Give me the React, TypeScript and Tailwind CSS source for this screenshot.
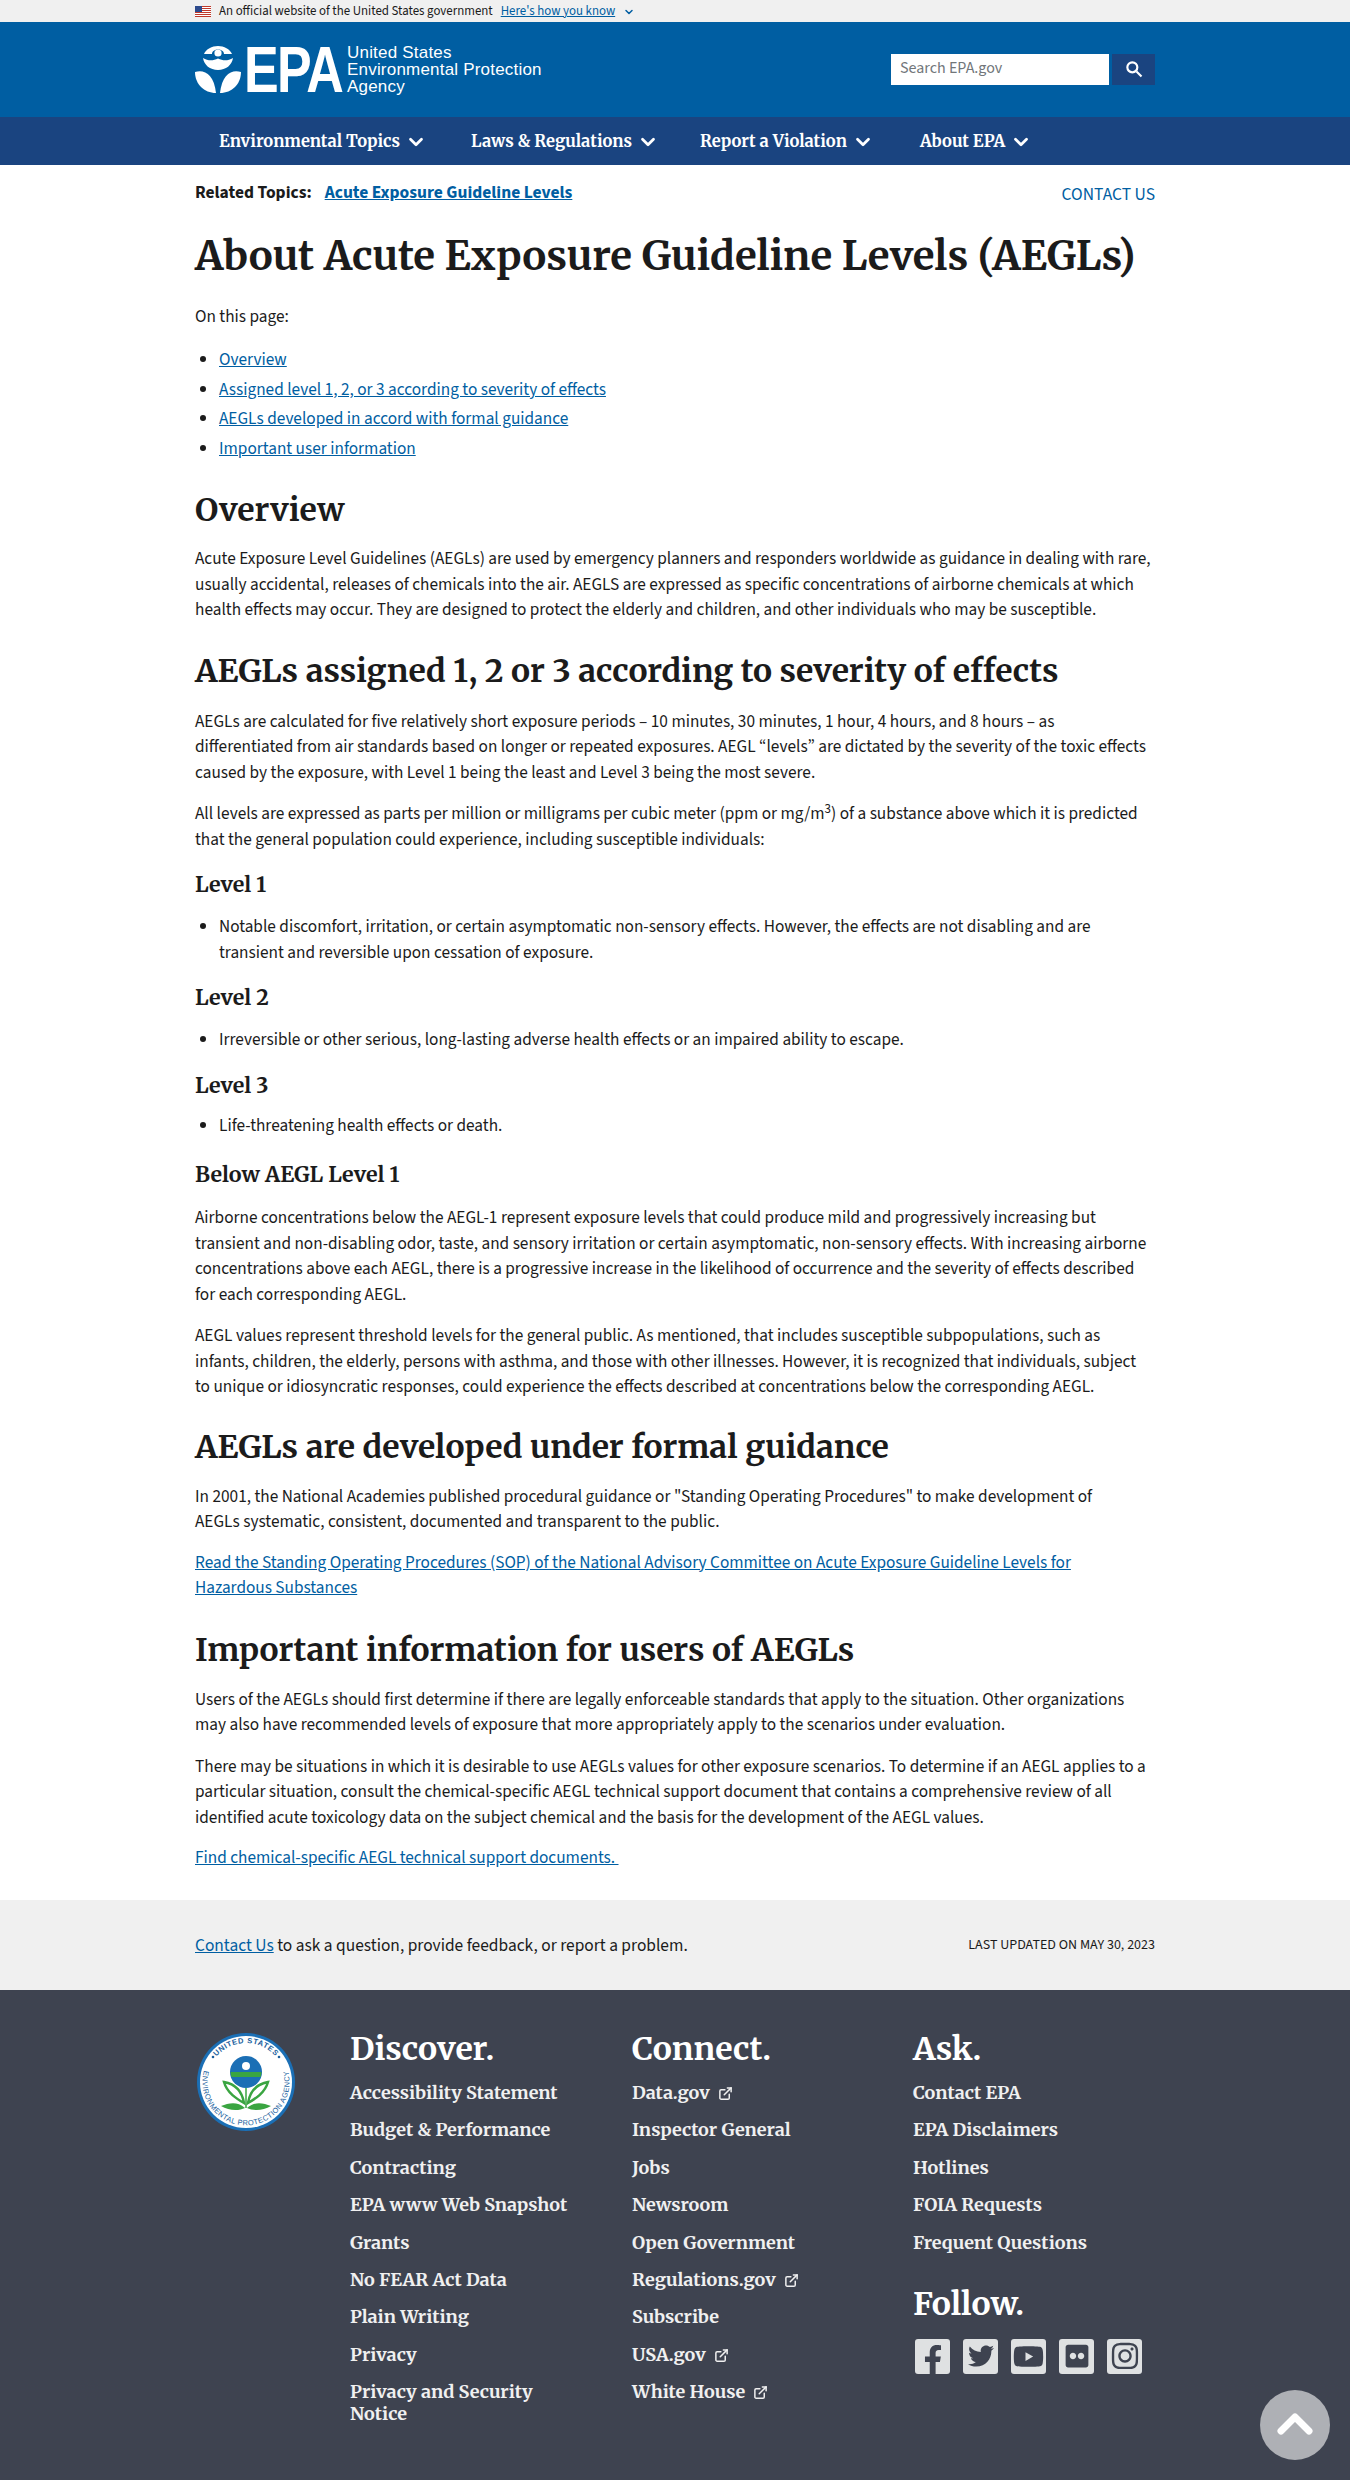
import { ChevronDown, ChevronUp, ExternalLink } from "lucide-react"
import { FaFacebookF, FaFlickr, FaInstagram, FaTwitter, FaYoutube } from "react-icons/fa"
import type { ReactNode } from "react"

const serif = "font-['Merriweather','Liberation_Serif',serif]"
const h2 = `${serif} font-bold text-[31.9px] leading-[42px]`
const h3 = `${serif} font-bold text-[21.4px] leading-[30px]`

function Flag() {
  return (
    <svg width="16" height="11" viewBox="0 0 16 11" className="shrink-0">
      <rect width="16" height="11" fill="#fff" />
      <path d="M0 0h16v1H0zM0 2h16v1H0zM0 4h16v1H0zM0 6h16v1H0zM0 8h16v1H0zM0 10h16v1H0z" fill="#c0392b" />
      <rect width="7" height="6" fill="#2c4a8c" />
    </svg>
  )
}

function EpaMark() {
  return (
    <svg width="46" height="47" viewBox="0 0 46 47" className="shrink-0">
      {/* globe with wave band */}
      <path d="M9 8 C11 3 17 0 23 0 C29 0 35 3 37 8 L29 8 C29 5 26 3.5 23 3.5 C20 3.5 17 5 17 8 Z" fill="#fff" />
      <circle cx="23" cy="7" r="3.6" fill="#fff" />
      <path d="M8 12 C13 15 18 15 23 12.5 C28 15 33 15 38 12 C37 19 31 24 23 24 C15 24 9 19 8 12 Z" fill="#fff" />
      {/* leaves */}
      <path d="M0 26 C9 23 19 28 21 47 C9 47 0 38 0 26 Z" fill="#fff" />
      <path d="M46 26 C37 23 27 28 25 47 C37 47 46 38 46 26 Z" fill="#fff" />
    </svg>
  )
}

function Seal() {
  return (
    <svg width="98" height="98" viewBox="0 0 98 98">
      <circle cx="49" cy="49" r="49" fill="#1b6fb5" />
      <circle cx="49" cy="49" r="46" fill="#fff" />
      <defs>
        <path id="sealTop" d="M10 49 a39 39 0 0 1 78 0" />
        <path id="sealBottom" d="M8.1 34.1 A43.5 43.5 0 1 0 89.9 34.1" />
      </defs>
      <text fontSize="7.6" fontWeight="700" fill="#1b5f9e" fontFamily="Liberation Sans, sans-serif" letterSpacing="0.6">
        <textPath href="#sealTop" startOffset="50%" textAnchor="middle">UNITED STATES</textPath>
      </text>
      <text fontSize="7.4" fill="#1b5f9e" fontFamily="Liberation Sans, sans-serif" letterSpacing="0.4">
        <textPath href="#sealBottom" startOffset="50%" textAnchor="middle">ENVIRONMENTAL PROTECTION AGENCY</textPath>
      </text>
      <circle cx="16" cy="24" r="1.3" fill="#1b5f9e" />
      <circle cx="82" cy="24" r="1.3" fill="#1b5f9e" />
      <circle cx="49" cy="39" r="16" fill="#1b6fb5" />
      <path d="M33.5 39 h31 a16 16 0 0 1 -1 5 h-29 a16 16 0 0 1 -1 -5 Z" fill="#3aa541" />
      <circle cx="49" cy="33" r="4" fill="#fff" />
      <path d="M49 55 V75" stroke="#3aa541" strokeWidth="1.5" />
      <path d="M47 70 C40 66 30 60 27 49 C38 51 45 58 47 70 Z M51 70 C58 66 68 60 71 49 C60 51 53 58 51 70 Z" fill="#fff" stroke="#3aa541" strokeWidth="2.5" />
      <path d="M48 75 C40 68 32 70 24 73 C32 78 42 78 48 75 Z M50 75 C58 68 66 70 74 73 C66 78 56 78 50 75 Z" fill="#3aa541" />
    </svg>
  )
}

function BodyLink({ children }: { children: ReactNode }) {
  return <a className="text-[#005ea2] underline">{children}</a>
}

function FooterLink({ label, external }: { label: string; external?: boolean }) {
  return (
    <li className={`${serif} text-[18px] leading-[22px] font-bold text-[#f0f0f0] mb-[15.4px]`}>
      {label}
      {external && <ExternalLink className="inline ml-2 align-[-2px]" size={15} strokeWidth={2.4} />}
    </li>
  )
}

function Social({ children }: { children: ReactNode }) {
  return (
    <div className="w-[35px] h-[35px] rounded-[3px] bg-[#dfe1e2] text-[#3e4350] flex items-center justify-center overflow-hidden">
      {children}
    </div>
  )
}

const navItems = [
  { label: "Environmental Topics", cls: "w-[252px]" },
  { label: "Laws & Regulations", cls: "w-[229px]" },
  { label: "Report a Violation", cls: "w-[220px]" },
  { label: "About EPA", cls: "" },
]

const discover = ["Accessibility Statement", "Budget & Performance", "Contracting", "EPA www Web Snapshot", "Grants", "No FEAR Act Data", "Plain Writing", "Privacy", "Privacy and Security Notice"]
const connect: [string, boolean][] = [["Data.gov", true], ["Inspector General", false], ["Jobs", false], ["Newsroom", false], ["Open Government", false], ["Regulations.gov", true], ["Subscribe", false], ["USA.gov", true], ["White House", true]]
const ask = ["Contact EPA", "EPA Disclaimers", "Hotlines", "FOIA Requests", "Frequent Questions"]

export default function App() {
  return (
    <div className="relative w-[1350px] h-[2480px] overflow-hidden bg-white text-[#1b1b1b] font-['Source_Sans_3','Source_Sans_Pro','Lato',sans-serif] text-[17.26px] leading-[25.5px]">
      {/* Gov banner */}
      <div className="h-[22px] bg-[#f0f0f0] px-[195px] flex items-center gap-2 text-[12.9px] pt-px">
        <Flag />
        <span>An official website of the United States government</span>
        <a className="text-[#005ea2] underline">Here's how you know</a>
        <ChevronDown size={12} strokeWidth={3} className="text-[#005ea2]" />
      </div>

      {/* Header */}
      <div className="h-[95px] bg-[#005ea2] px-[195px] flex items-center justify-between">
        <div className="flex items-center text-white">
          <EpaMark />
          <div className="w-[103px] ml-[3px] h-[47px] flex items-center">
            <span className="inline-block origin-left scale-x-[0.8] text-[65px] leading-none font-bold font-['Liberation_Sans',sans-serif] tracking-[-2px]">EPA</span>
          </div>
          <span className="text-[17px] leading-[17px] font-['Liberation_Sans',sans-serif] tracking-[0.2px]">United States<br />Environmental Protection<br />Agency</span>
        </div>
        <div className="flex h-[31px] w-[264px] gap-[3px] -mt-[1px]">
          <div className="flex-1 bg-white text-[#71767a] text-[16px] px-[9px] flex items-center">Search EPA.gov</div>
          <div className="w-[43px] bg-[#1a4480] flex items-center justify-center">
            <svg width="20" height="20" viewBox="0 0 24 24" fill="none" stroke="#fff" strokeWidth="2.6"><circle cx="10" cy="10" r="6" /><path d="M15 15l6 6" /></svg>
          </div>
        </div>
      </div>

      {/* Nav */}
      <div className={`h-[48px] bg-[#1a4480] pl-[219px] pt-px flex items-center text-white font-bold text-[16.5px] ${serif}`}>
        {navItems.map((n) => (
          <span key={n.label} className={`flex items-center gap-[5px] ${n.cls}`}>
            {n.label}
            <ChevronDown size={22} strokeWidth={3} />
          </span>
        ))}
      </div>

      <main className="px-[195px]">
        <div className="flex justify-between pt-[15px]">
          <div className="flex gap-[13px] font-bold text-[17.5px]">
            <span>Related Topics:</span>
            <a className="text-[#005ea2] underline">Acute Exposure Guideline Levels</a>
          </div>
          <a className="text-[#005ea2] uppercase text-[17.5px] translate-y-[2px]">Contact Us</a>
        </div>

        <h1 className={`${serif} font-bold text-[40.2px] leading-[52px] mt-[24px]`}>About Acute Exposure Guideline Levels (AEGLs)</h1>
        <p className="mt-[22px]">On this page:</p>
        <ul className="list-disc pl-6 mt-[18px] space-y-[4px]">
          <li><BodyLink>Overview</BodyLink></li>
          <li><BodyLink>Assigned level 1, 2, or 3 according to severity of effects</BodyLink></li>
          <li><BodyLink>AEGLs developed in accord with formal guidance</BodyLink></li>
          <li><BodyLink>Important user information</BodyLink></li>
        </ul>

        <h2 className={`${h2} mt-[28px]`}>Overview</h2>
        <p className="mt-[15px]">Acute Exposure Level Guidelines (AEGLs) are used by emergency planners and responders worldwide as guidance in dealing with rare, usually accidental, releases of chemicals into the air. AEGLS are expressed as specific concentrations of airborne chemicals at which health effects may occur. They are designed to protect the elderly and children, and other individuals who may be susceptible.</p>

        <h2 className={`${h2} mt-[27px]`}>AEGLs assigned 1, 2 or 3 according to severity of effects</h2>
        <p className="mt-[17px]">AEGLs are calculated for five relatively short exposure periods – 10 minutes, 30 minutes, 1 hour, 4 hours, and 8 hours – as differentiated from air standards based on longer or repeated exposures. AEGL “levels” are dictated by the severity of the toxic effects caused by the exposure, with Level 1 being the least and Level 3 being the most severe.</p>
        <p className="mt-[16px]">All levels are expressed as parts per million or milligrams per cubic meter (ppm or mg/m<sup>3</sup>) of a substance above which it is predicted that the general population could experience, including susceptible individuals:</p>

        <h3 className={`${h3} mt-[18px]`}>Level 1</h3>
        <ul className="list-disc pl-6 mt-[14px]"><li>Notable discomfort, irritation, or certain asymptomatic non-sensory effects. However, the effects are not disabling and are transient and reversible upon cessation of exposure.</li></ul>
        <h3 className={`${h3} mt-[18px]`}>Level 2</h3>
        <ul className="list-disc pl-6 mt-[14px]"><li>Irreversible or other serious, long-lasting adverse health effects or an impaired ability to escape.</li></ul>
        <h3 className={`${h3} mt-[18px]`}>Level 3</h3>
        <ul className="list-disc pl-6 mt-[12px]"><li>Life-threatening health effects or death.</li></ul>
        <h3 className={`${h3} mt-[22px]`}>Below AEGL Level 1</h3>
        <p className="mt-[15px]">Airborne concentrations below the AEGL-1 represent exposure levels that could produce mild and progressively increasing but transient and non-disabling odor, taste, and sensory irritation or certain asymptomatic, non-sensory effects. With increasing airborne concentrations above each AEGL, there is a progressive increase in the likelihood of occurrence and the severity of effects described for each corresponding AEGL.</p>
        <p className="mt-[16px] max-w-[950px]">AEGL values represent threshold levels for the general public. As mentioned, that includes susceptible subpopulations, such as infants, children, the elderly, persons with asthma, and those with other illnesses. However, it is recognized that individuals, subject to unique or idiosyncratic responses, could experience the effects described at concentrations below the corresponding AEGL.</p>

        <h2 className={`${h2} mt-[26px]`}>AEGLs are developed under formal guidance</h2>
        <p className="mt-[16px] max-w-[945px]">In 2001, the National Academies published procedural guidance or "Standing Operating Procedures" to make development of AEGLs systematic, consistent, documented and transparent to the public.</p>
        <p className="mt-[15px] max-w-[945px]"><BodyLink>Read the Standing Operating Procedures (SOP) of the National Advisory Committee on Acute Exposure Guideline Levels for Hazardous Substances</BodyLink></p>

        <h2 className={`${h2} mt-[28px]`}>Important information for users of AEGLs</h2>
        <p className="mt-[16px]">Users of the AEGLs should first determine if there are legally enforceable standards that apply to the situation. Other organizations may also have recommended levels of exposure that more appropriately apply to the scenarios under evaluation.</p>
        <p className="mt-[16px]">There may be situations in which it is desirable to use AEGLs values for other exposure scenarios. To determine if an AEGL applies to a particular situation, consult the chemical-specific AEGL technical support document that contains a comprehensive review of all identified acute toxicology data on the subject chemical and the basis for the development of the AEGL values.</p>
        <p className="mt-[15px]"><BodyLink>Find chemical-specific AEGL technical support documents.&nbsp;</BodyLink></p>
      </main>

      {/* Last updated band */}
      <div className="absolute left-0 right-0 top-[1900px] h-[90px] bg-[#f0f0f0] px-[195px] pt-[2px] flex items-center justify-between">
        <p className="text-[17.4px]"><BodyLink>Contact Us</BodyLink> to ask a question, provide feedback, or report a problem.</p>
        <p className="text-[14px] uppercase">Last updated on May 30, 2023</p>
      </div>

      {/* Footer */}
      <footer className="absolute left-0 right-0 top-[1990px] h-[490px] bg-[#3e4350] pl-[195px] pt-[41px] flex text-white">
        <div className="w-[155px] pl-[2px] pt-[2px]"><Seal /></div>
        <div className="w-[282px]">
          <h2 className={`${serif} font-bold text-[32px] leading-[36px]`}>Discover.</h2>
          <ul className="mt-[15px] w-[235px]">{discover.map((d) => <FooterLink key={d} label={d} />)}</ul>
        </div>
        <div className="w-[281px]">
          <h2 className={`${serif} font-bold text-[32px] leading-[36px]`}>Connect.</h2>
          <ul className="mt-[15px]">{connect.map(([c, e]) => <FooterLink key={c} label={c} external={e} />)}</ul>
        </div>
        <div>
          <h2 className={`${serif} font-bold text-[32px] leading-[36px]`}>Ask.</h2>
          <ul className="mt-[15px]">{ask.map((a) => <FooterLink key={a} label={a} />)}</ul>
          <h2 className={`${serif} font-bold text-[32px] leading-[36px] mt-[32px]`}>Follow.</h2>
          <div className="flex gap-[13px] mt-[17px] ml-[2px]">
            <Social><FaFacebookF size={30} className="translate-y-[4px]" /></Social>
            <Social><FaTwitter size={26} /></Social>
            <Social><FaYoutube size={31} /></Social>
            <Social><FaFlickr size={26} /></Social>
            <Social><FaInstagram size={30} /></Social>
          </div>
        </div>
      </footer>

      {/* Back to top */}
      <div className="absolute left-[1260px] top-[2390px] w-[70px] h-[70px] rounded-full bg-[#aeb0b5] flex items-center justify-center text-white">
        <ChevronUp size={56} strokeWidth={3} className="-mt-[2px]" />
      </div>
    </div>
  )
}
